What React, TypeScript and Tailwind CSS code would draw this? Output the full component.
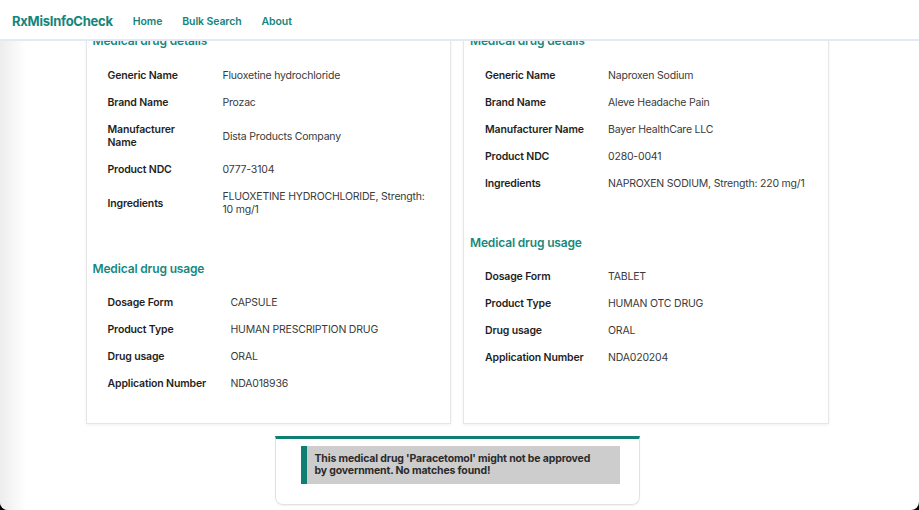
import React from "react";

type Row = { label: React.ReactNode; value: React.ReactNode; tall?: boolean };

const leftDetails: Row[] = [
  { label: "Generic Name", value: "Fluoxetine hydrochloride" },
  { label: "Brand Name", value: "Prozac" },
  { label: <>Manufacturer<br />Name</>, value: "Dista Products Company", tall: true },
  { label: "Product NDC", value: "0777-3104" },
  {
    label: "Ingredients",
    value: <>FLUOXETINE HYDROCHLORIDE, Strength:<br />10 mg/1</>,
    tall: true,
  },
];

const leftUsage: Row[] = [
  { label: "Dosage Form", value: "CAPSULE" },
  { label: "Product Type", value: "HUMAN PRESCRIPTION DRUG" },
  { label: "Drug usage", value: "ORAL" },
  { label: "Application Number", value: "NDA018936" },
];

const rightDetails: Row[] = [
  { label: "Generic Name", value: "Naproxen Sodium" },
  { label: "Brand Name", value: "Aleve Headache Pain" },
  { label: "Manufacturer Name", value: "Bayer HealthCare LLC" },
  { label: "Product NDC", value: "0280-0041" },
  { label: "Ingredients", value: "NAPROXEN SODIUM, Strength: 220 mg/1" },
];

const rightUsage: Row[] = [
  { label: "Dosage Form", value: "TABLET" },
  { label: "Product Type", value: "HUMAN OTC DRUG" },
  { label: "Drug usage", value: "ORAL" },
  { label: "Application Number", value: "NDA020204" },
];

function InfoTable({ rows, labelWidth }: { rows: Row[]; labelWidth: string }) {
  return (
    <div className="ml-[15px] flex flex-col">
      {rows.map((r, i) => (
        <div
          key={i}
          className={`flex items-center ${r.tall ? "h-[40px]" : "h-[27px]"}`}
        >
          <div
            className={`${labelWidth} shrink-0 text-[10.5px] leading-[13px] font-semibold tracking-[-0.15px] text-[#1f1f1f]`}
          >
            {r.label}
          </div>
          <div className="whitespace-nowrap text-[10.5px] leading-[13px] tracking-[-0.2px] text-[#3a3a3a]">
            {r.value}
          </div>
        </div>
      ))}
    </div>
  );
}

function SectionTitle({ children, first }: { children: React.ReactNode; first?: boolean }) {
  return (
    <h2
      className={`text-[12px] leading-[16px] font-semibold tracking-[-0.15px] text-[#17887f] ${
        first ? "mb-[13px]" : "mb-[12px]"
      }`}
    >
      {children}
    </h2>
  );
}

function DrugCard({
  details,
  usage,
  detailsLabelW,
}: {
  details: Row[];
  usage: Row[];
  detailsLabelW: string;
}) {
  return (
    <div className="bg-white border border-[#e6e6e6] shadow-[0_1px_3px_rgba(0,0,0,0.06)] pt-[12px] pb-[26px] px-[6px]">
      <SectionTitle first>Medical drug details</SectionTitle>
      <InfoTable rows={details} labelWidth={detailsLabelW} />
      <div className="mt-[38px]">
        <SectionTitle>Medical drug usage</SectionTitle>
        <InfoTable rows={usage} labelWidth="w-[123px]" />
      </div>
    </div>
  );
}

export default function App() {
  return (
    <div className="bg-black w-[919px] h-[510px]" style={{ fontFamily: "Inter, 'Noto Sans', sans-serif" }}>
      <div className="relative w-[919px] h-[510px] bg-white overflow-hidden rounded-b-[8px]">
        <header className="absolute top-0 left-0 right-0 z-10 h-[41px] bg-white border-b-2 border-[#e1e9f6] flex items-center pt-[5px] pl-[12px] gap-[20px]">
          <span className="text-[13px] font-bold tracking-[-0.25px] text-[#14857c]">RxMisInfoCheck</span>
          <nav className="flex gap-[20px] text-[10.5px] font-semibold tracking-[-0.1px] text-[#14857c]">
            <span>Home</span>
            <span>Bulk Search</span>
            <span>About</span>
          </nav>
        </header>

        <main className="pt-[20px] flex flex-col items-center">
          <div className="w-[743px] ml-[-5px] grid grid-cols-2 gap-[12px]">
            <DrugCard details={leftDetails} usage={leftUsage} detailsLabelW="w-[115px]" />
            <DrugCard details={rightDetails} usage={rightUsage} detailsLabelW="w-[123px]" />
          </div>

          <div className="mt-[12px] ml-[-5px] w-[365px] border border-[#e2e2e2] border-t-[3px] border-t-[#0f7f74] rounded-b-[8px] pt-[7px] pb-[20px] pl-[25px] pr-[19px] shadow-[0_1px_2px_rgba(0,0,0,0.06)]">
            <div className="bg-[#cdcdcd] border-l-[6px] border-[#0f7f74] py-[7px] pl-[8px] pr-[6px] text-[10.5px] leading-[12px] font-bold tracking-[-0.15px] text-[#2b2b2b]">
              This medical drug 'Paracetomol' might not be approved
              <br />
              by government. No matches found!
            </div>
          </div>
        </main>

        <div className="pointer-events-none absolute top-[41px] bottom-0 left-0 w-[26px] bg-gradient-to-r from-[#ededed] to-transparent z-[5]" />
      </div>
    </div>
  );
}
